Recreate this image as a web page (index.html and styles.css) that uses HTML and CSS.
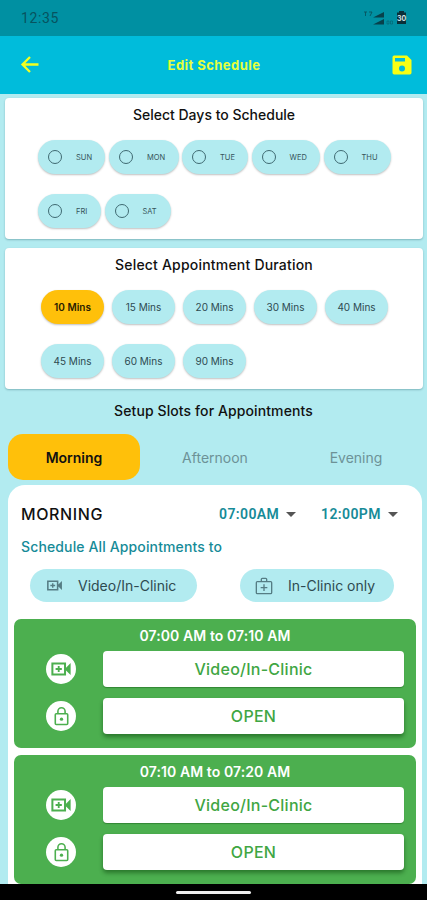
FILE: index.html
```html
<!DOCTYPE html>
<html lang="en">
<head>
  <meta charset="UTF-8">
  <meta name="viewport" content="width=device-width, initial-scale=1.0">
  <title>Edit Schedule</title>
  <link rel="stylesheet" href="styles.css">
</head>
<body>
  <!-- Shared icons -->
  <svg class="icon-defs" width="0" height="0">
    <symbol id="icon-video" viewBox="0 0 24 24">
      <path fill-rule="evenodd" d="M1.500 5h16v5.500l5-5v13l-5-5V19h-16zM3.700 7.200v9.600h11.600V7.200z"/>
      <path d="M8.500 8.800h2v2.200h2.400v2h-2.400v2.200h-2v-2.200H6.100v-2h2.400z"/>
    </symbol>
    <symbol id="icon-lock" viewBox="0 0 24 24">
      <path fill-rule="evenodd" d="M7 8V6a5 5 0 0 1 10 0v2h1a2 2 0 0 1 2 2v10a2 2 0 0 1-2 2H6a2 2 0 0 1-2-2V10a2 2 0 0 1 2-2zM8.800 8h6.400V6a3.200 3.200 0 0 0-6.400 0zM5.800 9.800v10.400h12.400V9.800z"/>
      <circle cx="12" cy="15" r="1.900"/>
    </symbol>
    <symbol id="icon-bag" viewBox="0 0 24 24">
      <path fill-rule="evenodd" d="M8 6V4a2 2 0 0 1 2-2h4a2 2 0 0 1 2 2v2h4a2 2 0 0 1 2 2v12a2 2 0 0 1-2 2H4a2 2 0 0 1-2-2V8a2 2 0 0 1 2-2zM9.600 6h4.800V3.600H9.600zM3.600 7.600v12.800h16.800V7.600z"/>
      <path d="M11.200 10h1.600v3.200H16v1.600h-3.200V18h-1.600v-3.200H8v-1.600h3.200z"/>
    </symbol>
  </svg>

  <div class="status-bar">
    <span class="clock">12:35</span>
    <svg class="status-icons" width="46" height="16" viewBox="0 0 46 16">
      <g fill="none" stroke="#07535f" stroke-width="0.9">
        <path d="M1 2h3M2.500 2v4M6 2h3l-2 4"/>
        <path d="M24 11h2v3h-2zM27.500 11h2v3h-2z" opacity="0.5"/>
      </g>
      <path d="M10 7.500L21 2v5.500zM10 14.500L21 9v5.500z" fill="#07414b"/>
      <path d="M36 1h5v1.500h2V14h-9V2.500h2z" fill="#0a2f38"/>
      <text class="battery" x="38.500" y="11" text-anchor="middle">30</text>
    </svg>
  </div>

  <header class="app-bar">
    <svg class="back" width="24" height="24" viewBox="0 0 24 24"><path d="M20.500 11.500H5M12 4L4.500 11.500l7.500 7.500" fill="none" stroke="#f4ff1f" stroke-width="2.300"/></svg>
    <h1>Edit Schedule</h1>
    <svg class="save" width="20" height="20" viewBox="0 0 20 20"><path fill="#f8ff14" fill-rule="evenodd" d="M2.200 0.500H15l4.500 4.500v12.800a1.700 1.700 0 0 1-1.700 1.700H2.200a1.700 1.700 0 0 1-1.700-1.700V2.200A1.700 1.700 0 0 1 2.200 0.500zM3 3v3.500h10V3zM10 10.500a3 3 0 1 0 0 6 3 3 0 0 0 0-6z"/></svg>
  </header>

  <main>
    <section class="card days-card">
      <h2>Select Days to Schedule</h2>
      <div class="days">
        <label class="day"><span class="radio"></span>SUN</label>
        <label class="day day-mon"><span class="radio"></span>MON</label>
        <label class="day day-tue"><span class="radio"></span>TUE</label>
        <label class="day day-wed"><span class="radio"></span>WED</label>
        <label class="day"><span class="radio"></span>THU</label>
        <label class="day day-fri"><span class="radio"></span>FRI</label>
        <label class="day day-sat"><span class="radio"></span>SAT</label>
      </div>
    </section>

    <section class="card duration-card">
      <h2>Select Appointment Duration</h2>
      <div class="durations">
        <button class="duration selected">10 Mins</button>
        <button class="duration">15 Mins</button>
        <button class="duration">20 Mins</button>
        <button class="duration">30 Mins</button>
        <button class="duration">40 Mins</button>
        <button class="duration">45 Mins</button>
        <button class="duration">60 Mins</button>
        <button class="duration">90 Mins</button>
      </div>
    </section>

    <h2 class="slots-title">Setup Slots for Appointments</h2>

    <nav class="tabs">
      <button class="tab active">Morning</button>
      <button class="tab">Afternoon</button>
      <button class="tab">Evening</button>
    </nav>

    <section class="panel">
      <div class="panel-head">
        <h3>MORNING</h3>
        <div class="time">07:00AM<span class="caret"></span></div>
        <div class="time">12:00PM<span class="caret"></span></div>
      </div>
      <p class="apply-all">Schedule All Appointments to</p>
      <div class="modes">
        <button class="mode mode-video"><svg width="17" height="17"><use href="#icon-video"/></svg>Video/In-Clinic</button>
        <button class="mode mode-clinic"><svg width="20" height="20"><use href="#icon-bag"/></svg>In-Clinic only</button>
      </div>

      <article class="slot">
        <h4>07:00 AM to 07:10 AM</h4>
        <div class="slot-row">
          <span class="badge"><svg width="22" height="22"><use href="#icon-video"/></svg></span>
          <button class="slot-button">Video/In-Clinic</button>
        </div>
        <div class="slot-row">
          <span class="badge"><svg width="21" height="21"><use href="#icon-lock"/></svg></span>
          <button class="slot-button raised">OPEN</button>
        </div>
      </article>

      <article class="slot">
        <h4>07:10 AM to 07:20 AM</h4>
        <div class="slot-row">
          <span class="badge"><svg width="22" height="22"><use href="#icon-video"/></svg></span>
          <button class="slot-button">Video/In-Clinic</button>
        </div>
        <div class="slot-row">
          <span class="badge"><svg width="21" height="21"><use href="#icon-lock"/></svg></span>
          <button class="slot-button raised">OPEN</button>
        </div>
      </article>
    </section>
  </main>

  <footer class="nav-bar"><span class="handle"></span></footer>
</body>
</html>
```
FILE: styles.css
```css
/* General Styles */
* {
  margin: 0;
  padding: 0;
  box-sizing: border-box;
}

body {
  display: flex;
  flex-direction: column;
  width: 427px;
  height: 900px;
  overflow: hidden;
  font-family: Inter, Roboto, sans-serif;
  background: #b2ebf0;
  color: #111;
}

button {
  border: none;
  font-family: inherit;
  white-space: nowrap;
}

svg {
  display: block;
  flex: none;
}

.icon-defs {
  position: absolute;
}

/* Top bars */
.status-bar {
  display: flex;
  align-items: center;
  justify-content: space-between;
  flex: none;
  height: 36px;
  padding: 0 18px 0 21px;
  background: #0090a2;
}

.clock {
  font-family: Roboto, sans-serif;
  font-size: 14px;
  letter-spacing: 0.6px;
  color: #07535f;
}

.battery {
  font-size: 7px;
  font-weight: 700;
  fill: #d5e5e8;
}

.app-bar {
  display: flex;
  align-items: center;
  justify-content: space-between;
  flex: none;
  height: 58px;
  padding: 0 15px 0 18px;
  background: #00bcdb;
}

.app-bar h1 {
  margin-right: 6px;
  font-size: 13px;
  font-weight: 700;
  letter-spacing: 0.45px;
  color: #e6ff3c;
}

main {
  flex: 1;
  min-height: 0;
  overflow: hidden;
  padding: 4px 5px 0;
}

/* Cards */
.card {
  width: 418px;
  background: #fff;
  border-radius: 4px;
  box-shadow: 0 1px 2px rgba(0, 60, 70, 0.3);
}

h2 {
  font-size: 14px;
  font-weight: 500;
  line-height: 20px;
  text-align: center;
}

.days-card {
  height: 141px;
  padding-top: 7px;
}

.duration-card {
  height: 141px;
  margin-top: 9px;
  padding-top: 7px;
}

.duration-card h2 {
  letter-spacing: 0.2px;
}

.days {
  display: flex;
  flex-wrap: wrap;
  gap: 20px 4px;
  padding: 15px 20px 0 33px;
}

.day {
  display: flex;
  align-items: center;
  gap: 14px;
  width: 67px;
  height: 34px;
  padding-left: 10px;
  border-radius: 17px;
  background: #b2ebf0;
  box-shadow: 0 1px 2px rgba(0, 0, 0, 0.25);
  font-size: 7.5px;
  color: #35535a;
}

.day-mon {
  width: 69.5px;
}

.day-tue {
  width: 66px;
}

.day-wed {
  width: 68px;
}

.day-fri {
  width: 62.5px;
}

.day-sat {
  width: 66px;
}

.day-tue,
.day-wed {
  margin-left: -0.5px;
}

.radio {
  width: 14px;
  height: 14px;
  border: 1.5px solid #3f6a72;
  border-radius: 50%;
}

.durations {
  display: flex;
  flex-wrap: wrap;
  gap: 20px 8px;
  padding: 15px 20px 0 36px;
}

.duration {
  width: 63px;
  height: 34px;
  border-radius: 17px;
  background: #b2ebf0;
  box-shadow: 0 1px 2px rgba(0, 0, 0, 0.25);
  font-size: 10px;
  color: #2e4a50;
}

.duration.selected {
  background: #ffc00a;
  font-weight: 600;
  color: #2a2000;
}

/* Tabs */
.slots-title {
  margin-top: 12px;
  letter-spacing: 0.1px;
}

.tabs {
  display: flex;
  gap: 9px;
  height: 46px;
  margin: 13px 0 5px;
  padding-left: 3px;
}

.tab {
  flex: none;
  width: 132px;
  border-radius: 15px;
  background: none;
  font-size: 14px;
  color: #6d9297;
}

.tab.active {
  background: #ffc00a;
  font-weight: 600;
  color: #111;
}

/* Schedule panel */
.panel {
  width: 414px;
  height: 420px;
  margin-left: 3px;
  padding: 15px 6px 0;
  border-radius: 17px 17px 0 0;
  background: #fff;
}

.panel-head {
  display: flex;
  align-items: center;
  height: 28px;
  padding-left: 7px;
}

h3 {
  flex: none;
  width: 198px;
  font-size: 16px;
  font-weight: 500;
  letter-spacing: 0.6px;
}

.time {
  display: flex;
  align-items: center;
  flex: none;
  width: 102px;
  font-family: Roboto, sans-serif;
  font-size: 14px;
  font-weight: 600;
  letter-spacing: 0.4px;
  color: #168b98;
}

.time:last-child {
  width: 85px;
}

.caret {
  margin-left: 7px;
  border: 5px solid transparent;
  border-top-color: #555;
  border-bottom: none;
}

.apply-all {
  height: 20px;
  margin-top: 9px;
  padding-left: 7px;
  font-size: 14px;
  font-weight: 500;
  letter-spacing: 0.13px;
  line-height: 20px;
  color: #168b98;
}

.modes {
  display: flex;
  justify-content: space-between;
  padding: 12px 22px 0 16px;
}

.mode {
  display: flex;
  align-items: center;
  height: 33px;
  border-radius: 17px;
  background: #b2ebf0;
  font-size: 14px;
  color: #2e4a50;
}

.mode svg {
  fill: #557d84;
}

.mode-video {
  gap: 15px;
  width: 167px;
  padding-left: 16px;
}

.mode-clinic {
  gap: 14px;
  width: 154px;
  padding-left: 14px;
}

/* Slots */
.slot {
  height: 129px;
  margin-top: 17px;
  padding: 7px 12px 0 32px;
  border-radius: 7px;
  background: #4caf4f;
}

.slot + .slot {
  margin-top: 7px;
}

.slot h4 {
  padding-right: 20px;
  font-size: 14px;
  font-weight: 600;
  letter-spacing: 0.08px;
  line-height: 20px;
  text-align: center;
  color: #fff;
}

.slot-row {
  display: flex;
  align-items: center;
  justify-content: space-between;
  height: 36px;
  margin-top: 5px;
}

.slot-row + .slot-row {
  margin-top: 11px;
}

.badge {
  display: flex;
  align-items: center;
  justify-content: center;
  width: 30px;
  height: 30px;
  border-radius: 50%;
  background: #fff;
}

.badge svg {
  fill: #4caf4f;
}

.slot-button {
  width: 301px;
  height: 36px;
  border-radius: 4px;
  background: #fff;
  box-shadow: 0 1px 1px rgba(0, 60, 0, 0.35);
  font-size: 16px;
  font-weight: 500;
  letter-spacing: 0.25px;
  color: #3fa643;
}

.slot-button.raised {
  box-shadow: 0 3px 4px rgba(0, 50, 0, 0.45);
}

/* System navigation */
.nav-bar {
  display: flex;
  align-items: center;
  justify-content: center;
  flex: none;
  height: 16px;
  background: #000;
}

.handle {
  width: 75px;
  height: 3px;
  border-radius: 2px;
  background: #eee;
}
```
